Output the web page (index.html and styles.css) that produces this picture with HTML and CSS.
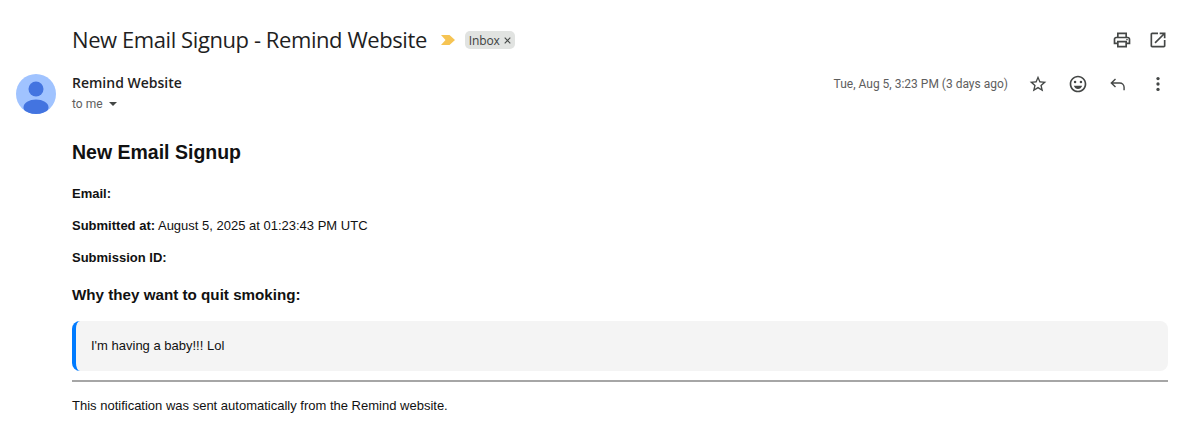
FILE: index.html
```html
<!DOCTYPE html>
<html lang="en">
<head>
    <meta charset="UTF-8">
    <meta name="viewport" content="width=device-width, initial-scale=1.0">
    <title>New Email Signup - Remind Website</title>
    <link rel="stylesheet" href="styles.css">
</head>
<body>

    <div class="subject-row">
        <h1 class="subject">New Email Signup - Remind Website</h1>
        <svg class="important" width="14" height="10" viewBox="0 0 14 10"><path d="M0 0h8.5L14 5l-5.5 5H0l4.5-5z" fill="#f6c453"/></svg>
        <span class="label">Inbox <svg class="label-x" width="7" height="7" viewBox="0 0 7 7"><path d="M.7.7l5.6 5.6M6.3.7L.7 6.3" stroke="#444746" stroke-width="1.1"/></svg></span>
        <div class="top-actions">
            <svg width="20" height="20" viewBox="0 0 24 24" fill="#444746"><path d="M19 8h-1V3H6v5H5c-1.66 0-3 1.34-3 3v6h4v4h12v-4h4v-6c0-1.66-1.34-3-3-3zM8 5h8v3H8V5zm8 14H8v-4h8v4zm4-4h-2v-2H6v2H4v-4c0-.55.45-1 1-1h14c.55 0 1 .45 1 1v4z"/><circle cx="18" cy="11.5" r="1"/></svg>
            <svg width="20" height="20" viewBox="0 0 24 24" fill="#444746"><path d="M19 19H5V5h7V3H5c-1.11 0-2 .9-2 2v14c0 1.1.89 2 2 2h14c1.1 0 2-.9 2-2v-7h-2v7zM14 3v2h3.59l-9.83 9.83 1.41 1.41L19 6.41V10h2V3h-7z"/></svg>
        </div>
    </div>

    <div class="sender-row">
        <svg class="avatar" width="40" height="40" viewBox="0 0 40 40">
            <defs><clipPath id="round"><circle cx="20" cy="20" r="20"/></clipPath></defs>
            <g clip-path="url(#round)">
                <rect width="40" height="40" fill="#a0c3ff"/>
                <circle cx="20" cy="15" r="7.5" fill="#4374e0"/>
                <ellipse cx="20" cy="33.5" rx="12.5" ry="8" fill="#4374e0"/>
            </g>
        </svg>
        <div class="sender-info">
            <div class="sender-name">Remind Website</div>
            <div class="sender-to">to me <span class="caret"></span></div>
        </div>
        <div class="sender-meta">
            <span class="date">Tue, Aug 5, 3:23 PM (3 days ago)</span>
            <div class="meta-actions">
                <svg width="20" height="20" viewBox="0 0 24 24" fill="#444746"><path d="M22 9.24l-7.19-.62L12 2 9.19 8.63 2 9.24l5.46 4.73L5.82 21 12 17.27 18.18 21l-1.63-7.03L22 9.24zM12 15.4l-3.76 2.27 1-4.28-3.32-2.88 4.38-.38L12 6.1l1.71 4.04 4.38.38-3.32 2.88 1 4.28L12 15.4z"/></svg>
                <svg width="20" height="20" viewBox="0 0 24 24" fill="#444746"><circle cx="15.5" cy="9.5" r="1.5"/><circle cx="8.5" cy="9.5" r="1.5"/><path d="M12 18c2.28 0 4.22-1.66 5-4H7c.78 2.34 2.72 4 5 4zM11.99 2C6.47 2 2 6.48 2 12s4.47 10 9.99 10C17.52 22 22 17.52 22 12S17.52 2 11.99 2zM12 20c-4.42 0-8-3.58-8-8s3.58-8 8-8 8 3.58 8 8-3.58 8-8 8z"/></svg>
                <svg width="20" height="20" viewBox="0 0 24 24" fill="none" stroke="#444746" stroke-width="1.7"><path d="M9 6l-5 4.8 5 4.8M4 10.8h10c3 0 5.3 2.2 5.3 5.2v3.5"/></svg>
                <svg width="20" height="20" viewBox="0 0 24 24" fill="#444746"><circle cx="12" cy="5.5" r="2"/><circle cx="12" cy="12" r="2"/><circle cx="12" cy="18.5" r="2"/></svg>
            </div>
        </div>
    </div>

    <div class="message">
        <h2>New Email Signup</h2>
        <p><strong>Email:</strong></p>
        <p><strong>Submitted at:</strong> August 5, 2025 at 01:23:43 PM UTC</p>
        <p><strong>Submission ID:</strong></p>
        <h3>Why they want to quit smoking:</h3>
        <div class="quote">I'm having a baby!!! Lol</div>
        <hr>
        <p class="footer-note">This notification was sent automatically from the Remind website.</p>
    </div>

</body>
</html>
```

FILE: styles.css
```css
body {
    margin: 0;
    background: #fff;
    color: #1f1f1f;
    font-family: Roboto, Arial, sans-serif;
    overflow: hidden;
}

svg {
    display: block;
    flex: none;
}

.subject-row {
    display: flex;
    align-items: center;
    height: 32px;
    padding: 24px 32px 0 72px;
}

.subject {
    margin: 0;
    padding-bottom: 2px;
    font-family: "Open Sans", Arial, sans-serif;
    font-size: 22px;
    font-weight: 400;
    letter-spacing: -0.42px;
    color: #1f1f1f;
}

.important {
    margin-left: 14px;
}

.label {
    display: flex;
    align-items: center;
    gap: 4px;
    margin-left: 10px;
    padding: 0 4px;
    height: 18px;
    border-radius: 5px;
    background: #e1e3e1;
    color: #3c3f3e;
    font-family: "Open Sans", Arial, sans-serif;
    font-size: 12px;
    letter-spacing: -0.15px;
}

.top-actions {
    display: flex;
    gap: 16px;
    margin-left: auto;
}

.sender-row {
    display: flex;
    padding: 18px 32px 0 16px;
}

.sender-info {
    margin-left: 16px;
    margin-top: -1px;
}

.sender-name {
    font-family: "Open Sans", Arial, sans-serif;
    font-size: 14px;
    font-weight: 600;
    line-height: 20px;
}

.sender-to {
    display: flex;
    align-items: center;
    margin-top: 1px;
    font-size: 12px;
    line-height: 20px;
    color: #5e5e5e;
}

.caret {
    margin-left: 6px;
    border-left: 4px solid transparent;
    border-right: 4px solid transparent;
    border-top: 4px solid #444746;
}

.sender-meta {
    display: flex;
    align-items: center;
    height: 20px;
    margin-left: auto;
}

.date {
    font-size: 12px;
    color: #5e5e5e;
}

.meta-actions {
    display: flex;
    gap: 20px;
    margin-left: 20px;
}

.message {
    padding: 0 32px 0 72px;
    color: #111;
    font-family: "Liberation Sans", Arial, sans-serif;
    font-size: 13px;
    line-height: 16px;
}

.message h2 {
    margin: 26px 0 0;
    font-size: 19.5px;
    line-height: 24px;
}

.message p {
    margin: 16px 0 0;
}

.message h2 + p {
    margin-top: 22px;
}

.message h3 {
    margin: 19px 0 0;
    font-size: 15.2px;
    line-height: 20px;
}

.quote {
    margin-top: 16px;
    padding: 16px 15px;
    border-left: 4px solid #007bff;
    border-radius: 8px;
    background: #f4f4f4;
    line-height: 18px;
}

.message hr {
    margin: 9px 0 0;
    border: 0;
    border-top: 2px solid #a6a6a6;
}

.message .footer-note {
    margin-top: 16px;
}
```
